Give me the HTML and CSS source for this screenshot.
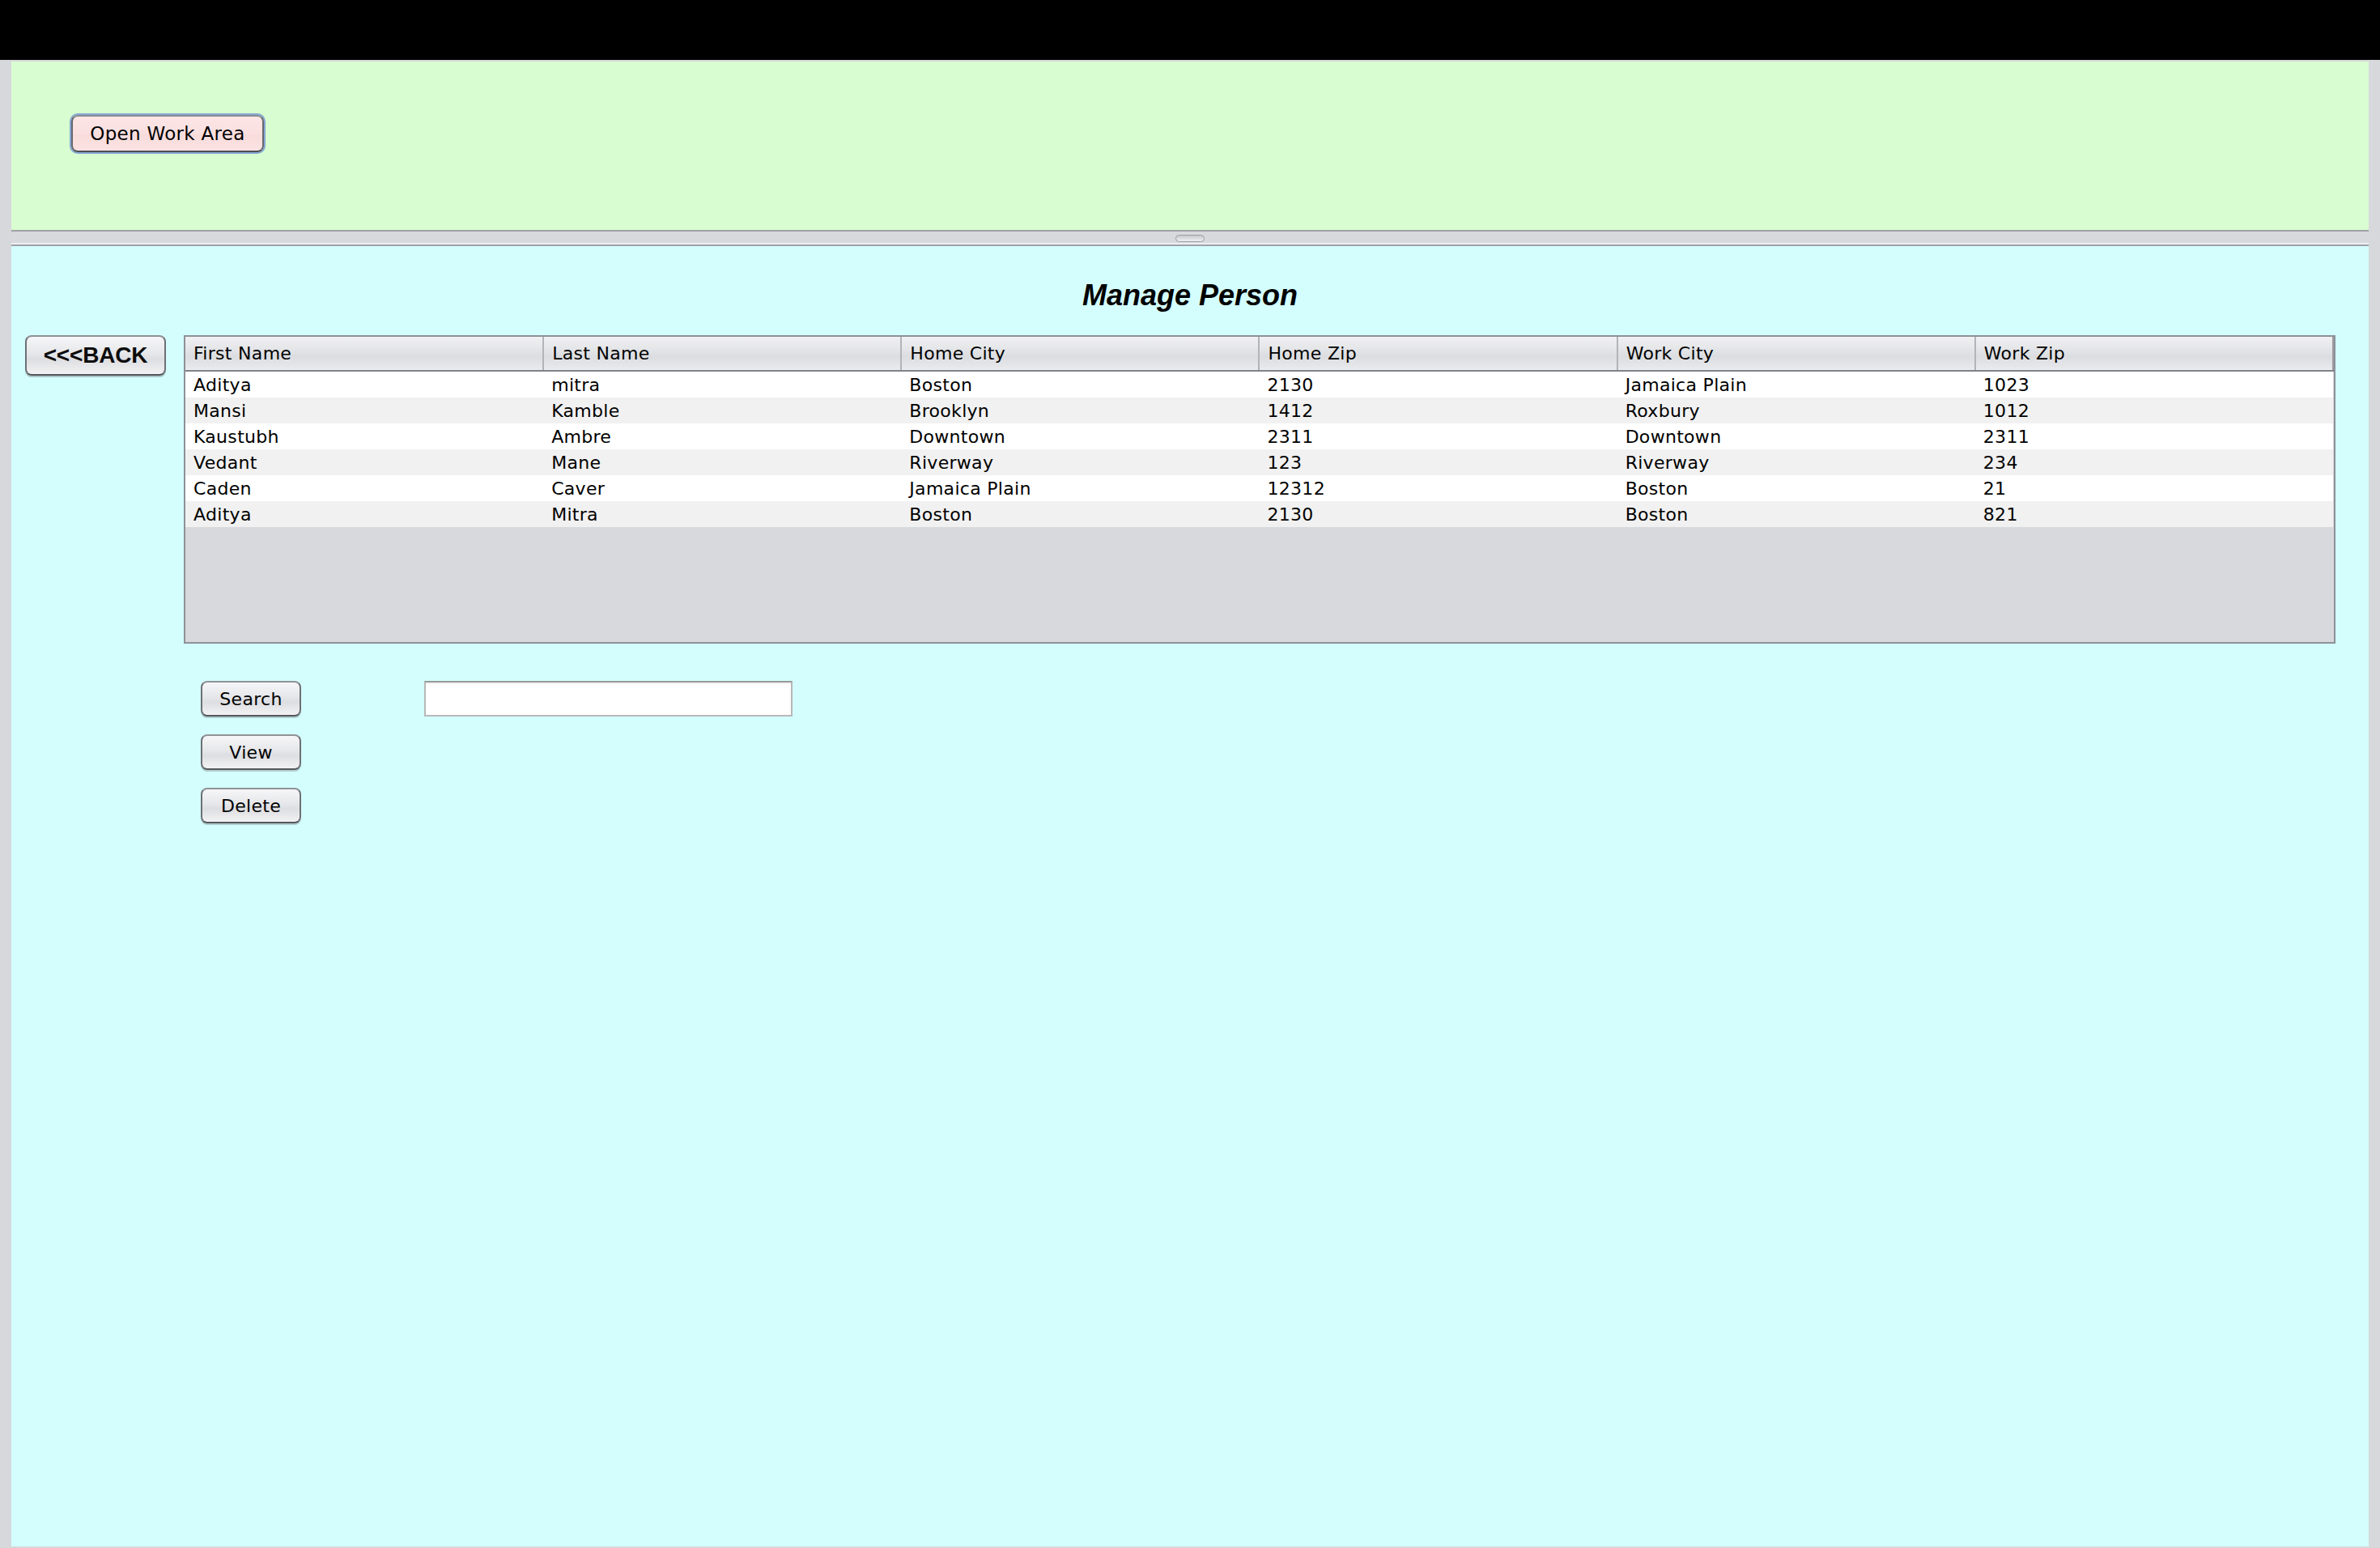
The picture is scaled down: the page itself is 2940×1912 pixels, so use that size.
FILE: index.html
```html
<!DOCTYPE html>
<html>
<head>
<meta charset="utf-8">
<title>Manage Person</title>
<link rel="stylesheet" href="styles.css">
</head>
<body>
<div class="topbar"></div>
<div class="frame">
  <div class="control-panel">
    <button class="open-btn">Open Work Area</button>
  </div>
  <div class="splitter"><span class="grip"></span></div>
  <div class="work-area">
    <h1 class="title">Manage Person</h1>
    <div class="main-row">
      <button class="back-btn">&lt;&lt;&lt;BACK</button>
      <div class="table-box">
        <table class="person-table">
          <thead>
            <tr><th>First Name</th><th>Last Name</th><th>Home City</th><th>Home Zip</th><th>Work City</th><th>Work Zip</th></tr>
          </thead>
          <tbody>
            <tr><td>Aditya</td><td>mitra</td><td>Boston</td><td>2130</td><td>Jamaica Plain</td><td>1023</td></tr>
            <tr><td>Mansi</td><td>Kamble</td><td>Brooklyn</td><td>1412</td><td>Roxbury</td><td>1012</td></tr>
            <tr><td>Kaustubh</td><td>Ambre</td><td>Downtown</td><td>2311</td><td>Downtown</td><td>2311</td></tr>
            <tr><td>Vedant</td><td>Mane</td><td>Riverway</td><td>123</td><td>Riverway</td><td>234</td></tr>
            <tr><td>Caden</td><td>Caver</td><td>Jamaica Plain</td><td>12312</td><td>Boston</td><td>21</td></tr>
            <tr><td>Aditya</td><td>Mitra</td><td>Boston</td><td>2130</td><td>Boston</td><td>821</td></tr>
          </tbody>
        </table>
      </div>
    </div>
    <div class="controls">
      <div class="action-col">
        <button class="aqua-btn">Search</button>
        <button class="aqua-btn">View</button>
        <button class="aqua-btn">Delete</button>
      </div>
      <input class="search-field" type="text" value="">
    </div>
  </div>
</div>
</body>
</html>
```
FILE: styles.css
```css
html, body {
  margin: 0;
  padding: 0;
  height: 100%;
}
body {
  width: 2940px;
  height: 1912px;
  background: #000;
  display: flex;
  flex-direction: column;
  font-family: "DejaVu Sans", "Noto Sans", sans-serif;
  overflow: hidden;
}
.topbar {
  height: 74px;
  background: #000;
  flex: none;
}
.frame {
  flex: 1;
  background: #d7d8dc;
  padding: 2px 14px 2px 14px;
  display: flex;
  flex-direction: column;
  min-height: 0;
}
.control-panel {
  height: 208px;
  flex: none;
  background: #d8fdd0;
  padding: 66px 0 0 74px;
  box-sizing: border-box;
}
.open-btn {
  width: 238px;
  height: 46px;
  box-sizing: border-box;
  border: 2px solid #66686c;
  border-top-color: #8a8c90;
  border-bottom-color: #4d4f53;
  border-radius: 8px;
  background: linear-gradient(#fde6e6, #fadfdf 50%, #f8dcdc 55%, #fbe2e2);
  box-shadow: 0 0 0 2px #85a7d4;
  font-family: "DejaVu Sans", "Noto Sans", sans-serif;
  font-size: 23px;
  letter-spacing: 0.3px;
  color: #000;
  padding: 0;
}
.splitter {
  height: 20px;
  flex: none;
  box-sizing: border-box;
  background: #d8d9dd;
  border-top: 2px solid #9fa1a7;
  border-bottom: 2px solid #9fa1a7;
  box-shadow: inset 0 -2px 0 #eeeef1;
  display: flex;
  justify-content: center;
  align-items: flex-start;
  padding-top: 4px;
}
.grip {
  width: 36px;
  height: 9px;
  box-sizing: border-box;
  border: 1px solid #9c9ea4;
  border-radius: 5px;
  background: linear-gradient(#c9cacf, #eeeff1);
}
.work-area {
  flex: 1;
  background: #d4fefe;
  display: flex;
  flex-direction: column;
  min-height: 0;
}
.title {
  margin: 40px 0 0 0;
  text-align: center;
  font-family: "Liberation Sans", Arial, sans-serif;
  font-weight: bold;
  font-style: italic;
  font-size: 36px;
  line-height: 42px;
  color: #000;
}
.main-row {
  margin-top: 28px;
  display: flex;
  align-items: flex-start;
  padding: 0 41px 0 17px;
  gap: 22px;
}
.back-btn {
  flex: none;
  width: 174px;
  height: 50px;
  box-sizing: border-box;
  border: 2px solid #6e7074;
  border-top-color: #8e9094;
  border-bottom-color: #55575b;
  border-radius: 8px;
  background: linear-gradient(#f6f6f8, #e6e7ea 45%, #dddee1 60%, #f2f2f4);
  box-shadow: 0 2px 0 rgba(90, 92, 96, 0.35);
  font-family: "Liberation Sans", Arial, sans-serif;
  font-weight: bold;
  font-size: 28px;
  color: #0c0c0c;
  padding: 0;
  letter-spacing: -0.2px;
}
.table-box {
  flex: 1;
  height: 381px;
  box-sizing: border-box;
  border: 2px solid #8d9197;
  background: #d8d9dd;
  overflow: hidden;
}
.person-table {
  width: 100%;
  table-layout: fixed;
  border-collapse: collapse;
  font-family: "DejaVu Sans", "Noto Sans", sans-serif;
  font-size: 22px;
  letter-spacing: 0.3px;
  color: #000;
}
.person-table th {
  height: 42px;
  box-sizing: border-box;
  padding: 0 0 0 10px;
  text-align: left;
  font-weight: normal;
  background: linear-gradient(#f1f1f3, #e3e4e7 40%, #dcdde0 60%, #e6e7ea 90%, #eeeef0);
  border-bottom: 2px solid #7e8289;
  border-right: 2px solid #b2b4b9;
  white-space: nowrap;
}
.person-table th:last-child {
  border-right-color: #9a9ca1;
}
.person-table td {
  height: 32px;
  box-sizing: border-box;
  padding: 2px 0 0 10px;
  line-height: 30px;
  white-space: nowrap;
  background: #ffffff;
}
.person-table tbody tr:nth-child(even) td {
  background: #f1f1f1;
}
.controls {
  margin-top: 46px;
  padding-left: 234px;
  display: flex;
  align-items: flex-start;
}
.action-col {
  display: flex;
  flex-direction: column;
  gap: 22px;
}
.aqua-btn {
  width: 124px;
  height: 44px;
  box-sizing: border-box;
  border: 2px solid #6e7074;
  border-top-color: #909296;
  border-bottom-color: #55575b;
  border-radius: 8px;
  background: linear-gradient(#f6f6f8, #e6e7ea 45%, #dddee1 60%, #f2f2f4);
  box-shadow: 0 2px 0 rgba(90, 92, 96, 0.3);
  font-family: "DejaVu Sans", "Noto Sans", sans-serif;
  font-size: 22px;
  letter-spacing: 0.3px;
  color: #000;
  padding: 0;
}
.search-field {
  margin-left: 152px;
  width: 455px;
  height: 44px;
  box-sizing: border-box;
  border: 2px solid #b8b8b8;
  border-top-color: #999999;
  background: #fff;
  box-shadow: inset 0 2px 2px rgba(0, 0, 0, 0.06);
  padding: 0 6px;
  font-family: "DejaVu Sans", "Noto Sans", sans-serif;
  font-size: 22px;
  outline: none;
}
```
